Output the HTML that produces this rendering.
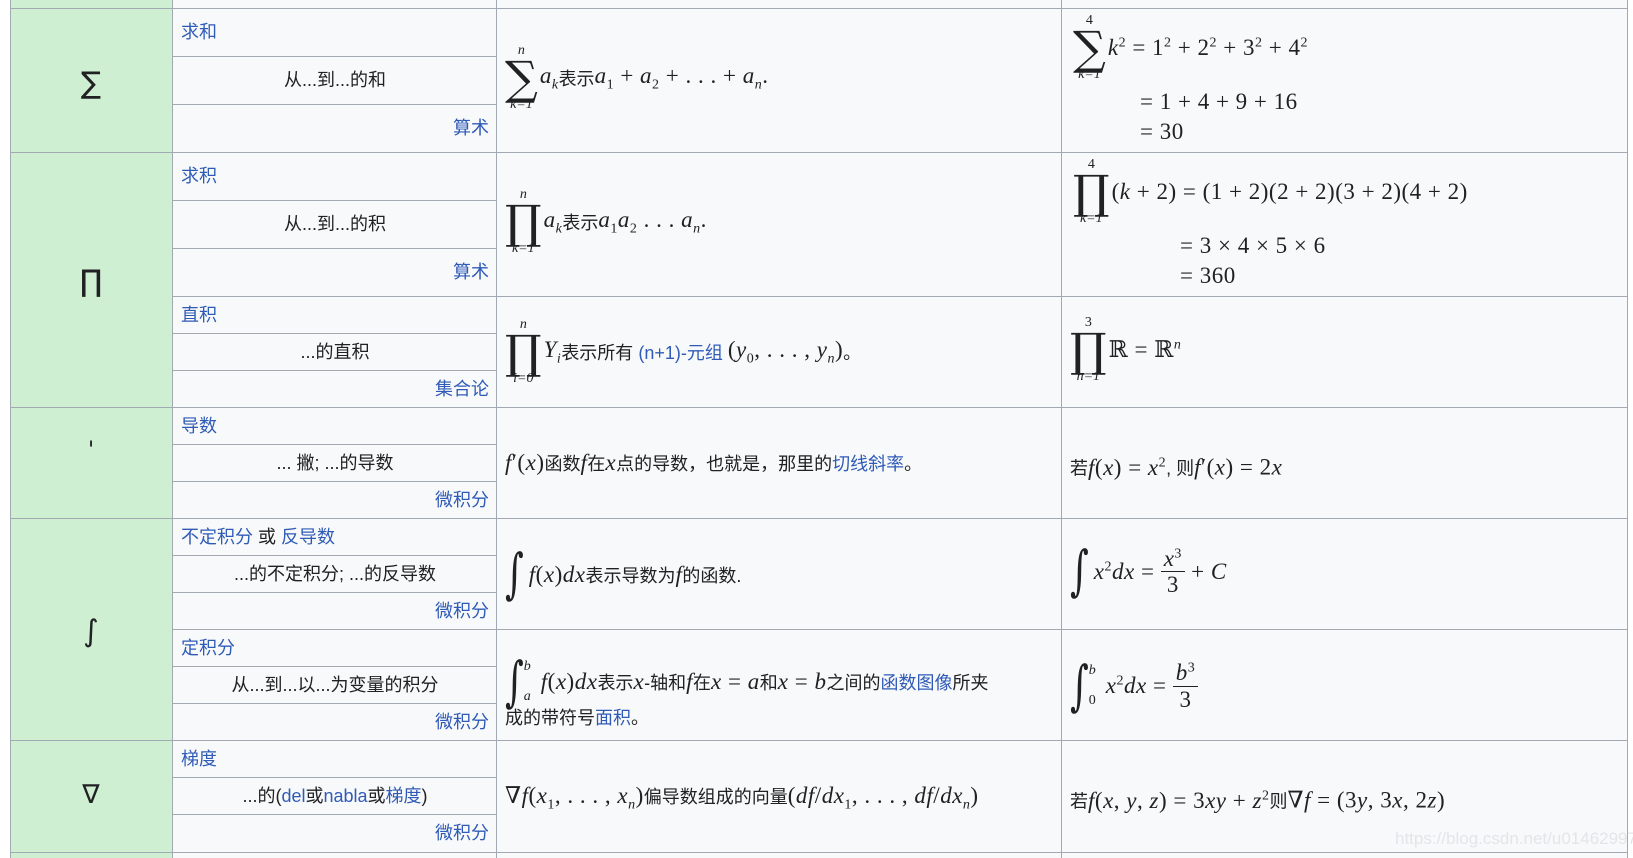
<!DOCTYPE html>
<html><head><meta charset="utf-8"><style>
*{margin:0;padding:0;box-sizing:border-box}
body{width:1633px;height:858px;background:#fff;position:relative;overflow:hidden;font-family:"Liberation Sans","Noto Sans CJK SC",sans-serif;font-size:18px;color:#202122}
.g{position:absolute;background:#cfefd3}
.c{position:absolute;background:#f8f9fa}
.h{position:absolute;height:1px;background:#a2a9b1}
.v{position:absolute;width:1px;background:#a2a9b1}
.t{position:absolute;height:30px;line-height:30px;white-space:nowrap}
.a{color:#2f5bb7}
.m{font-family:"Liberation Serif","DejaVu Serif",serif;font-size:23px;letter-spacing:0.5px}
.i{font-style:italic}
sub,sup{font-size:14px}
.op{display:inline-flex;flex-direction:column;align-items:center;vertical-align:middle;line-height:1;margin-right:2px}
.op .s{font-size:14px;font-style:italic;font-family:"Liberation Serif",serif}
.op .b{font-size:46px;font-family:"DejaVu Serif",serif;line-height:40px}
.sym{position:absolute;width:162px;left:10px;text-align:center;font-size:30px;font-family:"DejaVu Sans",sans-serif}
.frac{display:inline-flex;flex-direction:column;align-items:center;vertical-align:middle;line-height:1.1}
.frac span:first-child{border-bottom:1px solid #202122;padding:0 3px}
.int{font-family:"DejaVu Serif",serif;font-size:36px;display:inline-block;transform:scaleY(1.5);font-style:italic}
</style></head><body>
<div class="g" style="left:10px;top:0;width:163px;height:858px"></div>
<div class="c" style="left:173px;top:0;width:1454px;height:858px"></div>
<div class="v" style="left:10px;top:0;height:858px"></div>
<div class="v" style="left:172px;top:0;height:858px"></div>
<div class="v" style="left:496px;top:0;height:858px"></div>
<div class="v" style="left:1061px;top:0;height:858px"></div>
<div class="v" style="left:1627px;top:0;height:858px"></div>
<div class="h" style="left:10px;width:1618px;top:8px"></div>
<div class="h" style="left:10px;width:1618px;top:152px"></div>
<div class="h" style="left:172px;width:1456px;top:296px"></div>
<div class="h" style="left:10px;width:1618px;top:407px"></div>
<div class="h" style="left:10px;width:1618px;top:518px"></div>
<div class="h" style="left:172px;width:1456px;top:629px"></div>
<div class="h" style="left:10px;width:1618px;top:740px"></div>
<div class="h" style="left:10px;width:1618px;top:852px"></div>
<div class="h" style="left:172px;width:325px;top:56px"></div>
<div class="h" style="left:172px;width:325px;top:104px"></div>
<div class="h" style="left:172px;width:325px;top:200px"></div>
<div class="h" style="left:172px;width:325px;top:248px"></div>
<div class="h" style="left:172px;width:325px;top:333px"></div>
<div class="h" style="left:172px;width:325px;top:370px"></div>
<div class="h" style="left:172px;width:325px;top:444px"></div>
<div class="h" style="left:172px;width:325px;top:481px"></div>
<div class="h" style="left:172px;width:325px;top:555px"></div>
<div class="h" style="left:172px;width:325px;top:592px"></div>
<div class="h" style="left:172px;width:325px;top:666px"></div>
<div class="h" style="left:172px;width:325px;top:703px"></div>
<div class="h" style="left:172px;width:325px;top:777px"></div>
<div class="h" style="left:172px;width:325px;top:814px"></div>

<div class="sym" style="top:66px">∑</div>
<div class="sym" style="top:264px">∏</div>
<div class="sym" style="top:438px;font-size:22px">'</div>
<div class="sym" style="top:614px">∫</div>
<div class="sym" style="top:780px;font-size:26px">∇</div>

<div class="t a" style="left:181px;top:17px">求和</div>
<div class="t" style="left:173px;width:324px;text-align:center;top:65px">从...到...的和</div>
<div class="t a" style="left:173px;width:316px;text-align:right;top:113px">算术</div>
<div class="t a" style="left:181px;top:161px">求积</div>
<div class="t" style="left:173px;width:324px;text-align:center;top:209px">从...到...的积</div>
<div class="t a" style="left:173px;width:316px;text-align:right;top:257px">算术</div>
<div class="t a" style="left:181px;top:300px">直积</div>
<div class="t" style="left:173px;width:324px;text-align:center;top:337px">...的直积</div>
<div class="t a" style="left:173px;width:316px;text-align:right;top:374px">集合论</div>
<div class="t a" style="left:181px;top:411px">导数</div>
<div class="t" style="left:173px;width:324px;text-align:center;top:448px">... 撇; ...的导数</div>
<div class="t a" style="left:173px;width:316px;text-align:right;top:485px">微积分</div>
<div class="t" style="left:181px;top:522px"><span class="a">不定积分</span> 或 <span class="a">反导数</span></div>
<div class="t" style="left:173px;width:324px;text-align:center;top:559px">...的不定积分; ...的反导数</div>
<div class="t a" style="left:173px;width:316px;text-align:right;top:596px">微积分</div>
<div class="t a" style="left:181px;top:633px">定积分</div>
<div class="t" style="left:173px;width:324px;text-align:center;top:670px">从...到...以...为变量的积分</div>
<div class="t a" style="left:173px;width:316px;text-align:right;top:707px">微积分</div>
<div class="t a" style="left:181px;top:744px">梯度</div>
<div class="t" style="left:173px;width:324px;text-align:center;top:781px">...的(<span class="a">del</span>或<span class="a">nabla</span>或<span class="a">梯度</span>)</div>
<div class="t a" style="left:173px;width:316px;text-align:right;top:818px">微积分</div>

<div style="position:absolute;left:505px;top:44px;display:flex;align-items:center">
<span class="op"><span class="s">n</span><span class="b">∑</span><span class="s">k=1</span></span>
<span class="m"><i>a<sub>k</sub></i></span>表示<span class="m"><i>a</i><sub>1</sub> + <i>a</i><sub>2</sub> + . . . + <i>a<sub>n</sub></i>.</span></div>

<div style="position:absolute;left:505px;top:188px;display:flex;align-items:center">
<span class="op"><span class="s">n</span><span class="b">∏</span><span class="s">k=1</span></span>
<span class="m"><i>a<sub>k</sub></i></span>表示<span class="m"><i>a</i><sub>1</sub><i>a</i><sub>2</sub> . . . <i>a<sub>n</sub></i>.</span></div>

<div style="position:absolute;left:505px;top:318px;display:flex;align-items:center">
<span class="op"><span class="s">n</span><span class="b">∏</span><span class="s">i=0</span></span>
<span class="m"><i>Y<sub>i</sub></i></span>表示所有&nbsp;<span class="a">(n+1)-元组</span>&nbsp;<span class="m">(<i>y</i><sub>0</sub>, . . . , <i>y<sub>n</sub></i>)</span>。</div>

<div class="t" style="left:505px;top:448px"><span class="m"><i>f</i>′(<i>x</i>)</span>函数<span class="m i">f</span>在<span class="m i">x</span>点的导数，也就是，那里的<span class="a">切线斜率</span>。</div>

<div style="position:absolute;left:505px;top:554px;display:flex;align-items:center">
<span class="int">∫</span>&nbsp;<span class="m"><i>f</i>(<i>x</i>)<i>dx</i></span>表示导数为<span class="m i">f</span>的函数.</div>

<div style="position:absolute;left:505px;top:652px;display:flex;align-items:center">
<span class="int">∫</span><span style="display:inline-flex;flex-direction:column;font-family:'Liberation Serif';font-style:italic;font-size:14px;line-height:30px;margin-right:10px"><span>b</span><span>a</span></span>
<span class="m"><i>f</i>(<i>x</i>)<i>dx</i></span>表示<span class="m i">x</span>-轴和<span class="m i">f</span>在<span class="m"><i>x</i> = <i>a</i></span>和<span class="m"><i>x</i> = <i>b</i></span>之间的<span class="a">函数图像</span>所夹</div>
<div class="t" style="left:505px;top:703px">成的带符号<span class="a">面积</span>。</div>

<div class="t" style="left:505px;top:781px"><span class="m">∇<i>f</i>(<i>x</i><sub>1</sub>, . . . , <i>x<sub>n</sub></i>)</span>偏导数组成的向量<span class="m">(<i>df</i>/<i>dx</i><sub>1</sub>, . . . , <i>df</i>/<i>dx<sub>n</sub></i>)</span></div>

<div style="position:absolute;left:1073px;top:14px;display:flex;align-items:center">
<span class="op"><span class="s" style="font-style:normal">4</span><span class="b">∑</span><span class="s">k=1</span></span>
<span class="m"><i>k</i><sup>2</sup> = 1<sup>2</sup> + 2<sup>2</sup> + 3<sup>2</sup> + 4<sup>2</sup></span></div>
<div class="t m" style="left:1140px;top:87px">= 1 + 4 + 9 + 16</div>
<div class="t m" style="left:1140px;top:117px">= 30</div>

<div style="position:absolute;left:1073px;top:158px;display:flex;align-items:center">
<span class="op"><span class="s" style="font-style:normal">4</span><span class="b">∏</span><span class="s">k=1</span></span>
<span class="m">(<i>k</i> + 2) = (1 + 2)(2 + 2)(3 + 2)(4 + 2)</span></div>
<div class="t m" style="left:1180px;top:231px">= 3 × 4 × 5 × 6</div>
<div class="t m" style="left:1180px;top:261px">= 360</div>

<div style="position:absolute;left:1070px;top:316px;display:flex;align-items:center">
<span class="op"><span class="s" style="font-style:normal">3</span><span class="b">∏</span><span class="s">n=1</span></span>
<span class="m">ℝ = ℝ<sup><i>n</i></sup></span></div>

<div class="t" style="left:1070px;top:448px">若<span class="m"><i>f</i>(<i>x</i>) = <i>x</i><sup>2</sup></span>, 则<span class="m"><i>f</i>′(<i>x</i>) = 2<i>x</i></span></div>

<div style="position:absolute;left:1070px;top:546px;display:flex;align-items:center">
<span class="int">∫</span>&nbsp;<span class="m"><i>x</i><sup>2</sup><i>dx</i> =&nbsp;</span><span class="frac m"><span><i>x</i><sup>3</sup></span><span>3</span></span><span class="m">&nbsp;+ <i>C</i></span></div>

<div style="position:absolute;left:1070px;top:656px;display:flex;align-items:center">
<span class="int">∫</span><span style="display:inline-flex;flex-direction:column;font-family:'Liberation Serif';font-size:14px;line-height:30px;margin-right:10px"><span><i>b</i></span><span>0</span></span>
<span class="m"><i>x</i><sup>2</sup><i>dx</i> =&nbsp;</span><span class="frac m"><span><i>b</i><sup>3</sup></span><span>3</span></span></div>

<div class="t" style="left:1070px;top:781px">若<span class="m"><i>f</i>(<i>x</i>, <i>y</i>, <i>z</i>) = 3<i>xy</i> + <i>z</i><sup>2</sup></span>则<span class="m">∇<i>f</i> = (3<i>y</i>, 3<i>x</i>, 2<i>z</i>)</span></div>
<div class="t" style="left:1395px;top:824px;color:#e3e5e8;font-size:17px">https://blog.csdn.net/u014629974</div>
</body></html>
